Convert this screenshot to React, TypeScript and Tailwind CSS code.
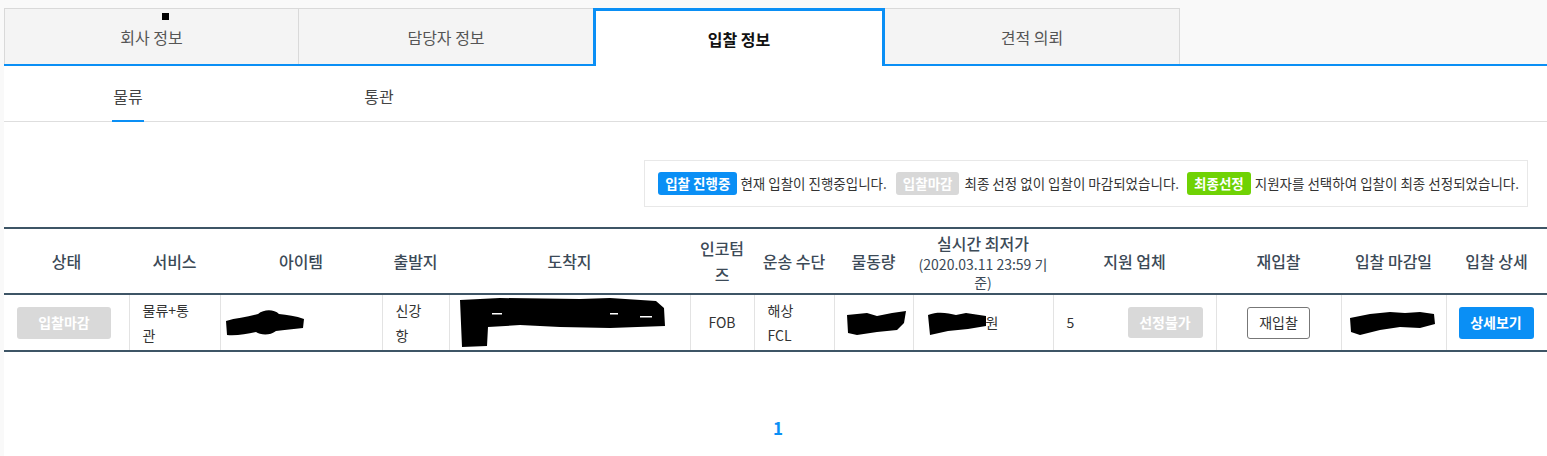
import React from "react";

const FONT = { fontFamily: '"Noto Sans CJK KR", "Noto Sans", sans-serif' };

function Blob({ w, h, d, extra }: { w: number; h: number; d: string; extra?: React.ReactNode }) {
  return (
    <svg width={w} height={h} viewBox={`0 0 ${w} ${h}`} className="block">
      <path d={d} fill="#000" />
      {extra}
    </svg>
  );
}

const cols = [125, 91, 162, 67, 241, 64, 80, 79, 140, 163, 125, 105, 101];

export default function App() {
  const tabs = ["회사 정보", "담당자 정보", "입찰 정보", "견적 의뢰"];
  const tabW = [294, 295, 292, 295];
  return (
    <div style={FONT} className="min-h-screen bg-[#f9f9f9] pl-[4px] pt-[8px] flex flex-col">
      {/* Top tabs */}
      <div className="relative flex items-end border-b-2 border-[#0a8ff5]">
        {tabs.map((t, i) =>
          i === 2 ? (
            <div
              key={t}
              style={{ width: tabW[i] }}
              className="h-[58px] -mb-[2px] bg-white border-t-[3px] border-x-[3px] border-[#0a8ff5] flex items-center justify-center text-[16px] font-bold text-[#111]"
            >
              {t}
            </div>
          ) : (
            <div
              key={t}
              style={{ width: tabW[i] }}
              className={`h-[56px] bg-[#f4f4f4] border-t border-[#d9d9d9] ${i === 0 ? "border-l" : ""} ${i === 3 ? "border-r" : ""} ${i === 1 ? "border-l" : ""} flex items-center justify-center text-[16px] text-[#555]`}
            >
              {t}
            </div>
          )
        )}
        <div className="absolute left-[158px] top-[5px] w-[7px] h-[7px] bg-black" />
      </div>

      {/* Content */}
      <div className="flex-1 bg-white">
        {/* Sub tabs */}
        <div className="flex border-b border-[#dedede]">
          <div className="w-[248px] flex justify-center">
            <span className="px-[1px] pt-[18px] pb-[12px] leading-[24px] text-[16px] text-[#444] border-b-[2px] border-[#0a8ff5] -mb-px">
              물류
            </span>
          </div>
          <div className="w-[254px] flex justify-center">
            <span className="pt-[18px] pb-[12px] leading-[24px] text-[16px] text-[#444] border-b-[2px] border-transparent -mb-px">
              통관
            </span>
          </div>
        </div>

        {/* Legend */}
        <div className="flex mt-[38px]">
          <div className="ml-auto mr-[19px] h-[47px] border border-[#e8e8e8] flex items-center pl-[13px] pr-[8px] whitespace-nowrap text-[13.5px] text-[#333]">
            <span className="h-[23px] leading-[23px] px-[7px] rounded-[3px] bg-[#0a8ff5] text-white font-bold">입찰 진행중</span>
            <span className="ml-[3px] mr-[9px]">현재 입찰이 진행중입니다.</span>
            <span className="h-[23px] leading-[23px] px-[7px] rounded-[3px] bg-[#d8d8d8] text-white font-bold">입찰마감</span>
            <span className="ml-[5px] mr-[8px]">최종 선정 없이 입찰이 마감되었습니다.</span>
            <span className="h-[23px] leading-[23px] px-[7px] rounded-[3px] bg-[#6fd204] text-white font-bold">최종선정</span>
            <span className="ml-[4px]">지원자를 선택하여 입찰이 최종 선정되었습니다.</span>
          </div>
        </div>

        {/* Table */}
        <table className="mt-[20px] table-fixed border-collapse w-[1543px]">
          <colgroup>
            {cols.map((w, i) => (
              <col key={i} style={{ width: w }} />
            ))}
          </colgroup>
          <thead>
            <tr className="h-[66px] border-t-2 border-b-2 border-[#3e5566]">
              {["상태", "서비스", "아이템", "출발지", "도착지"].map((h) => (
                <th key={h} className="px-[6px] py-[3px] text-[16px] font-medium text-[#3c4a57] leading-[23px] text-center align-middle">
                  {h}
                </th>
              ))}
              <th className="px-[4px] py-[3px] text-[16px] font-medium text-[#3c4a57] leading-[26px] text-center align-middle">
                인코텀
                <br />즈
              </th>
              <th className="px-[4px] py-[3px] text-[16px] font-medium text-[#3c4a57] leading-[23px] text-center align-middle whitespace-nowrap">
                운송 수단
              </th>
              <th className="px-[4px] py-[3px] text-[16px] font-medium text-[#3c4a57] leading-[23px] text-center align-middle">
                물동량
              </th>
              <th className="px-[2px] py-[2px] text-[16px] font-medium text-[#3c4a57] leading-[24px] text-center align-middle whitespace-nowrap">
                실시간 최저가
                <span className="block text-[14px] leading-[18px] font-normal">
                  (2020.03.11 23:59 기
                  <br />준)
                </span>
              </th>
              {["지원 업체", "재입찰", "입찰 마감일", "입찰 상세"].map((h) => (
                <th key={h} className="px-[4px] py-[3px] text-[16px] font-medium text-[#3c4a57] leading-[23px] text-center align-middle whitespace-nowrap">
                  {h}
                </th>
              ))}
            </tr>
          </thead>
          <tbody>
            <tr className="h-[57px] border-b-2 border-[#3e5566] text-[14px] leading-[25px] text-[#333]">
              <td className="pl-[13px] pr-[4px] align-middle">
                <div className="w-[94px] h-[32px] rounded-[3px] bg-[#d9d9d9] text-white font-bold flex items-center justify-center">
                  입찰마감
                </div>
              </td>
              <td className="border-l border-[#e3e3e3] px-[13px] align-middle">
                물류+통
                <br />관
              </td>
              <td className="border-l border-[#e3e3e3] pl-[5px] align-middle">
                <Blob
                  w={78}
                  h={28}
                  d="M0 12 C10 9 22 8 32 5 C38 0 48 0 53 5 C61 6 70 7 78 10 L77 19 C68 20 58 21 50 22 C44 27 34 26 30 23 C20 25 10 27 1 26 Z"
                />
              </td>
              <td className="border-l border-[#e3e3e3] px-[13px] align-middle">
                신강
                <br />항
              </td>
              <td className="border-l border-[#e3e3e3] pl-[10px] align-middle">
                <Blob
                  w={206}
                  h={50}
                  d="M0 2 L40 0 L120 1 L150 0 L196 3 L204 10 L205 28 L150 30 L100 29 L60 27 L28 29 L27 48 L2 49 Z"
                  extra={
                    <>
                      <rect x="32" y="15" width="10" height="1.5" fill="#fff" />
                      <rect x="150" y="15" width="8" height="1.5" fill="#fff" />
                      <rect x="180" y="18" width="12" height="1.5" fill="#fff" />
                    </>
                  }
                />
              </td>
              <td className="border-l border-[#e3e3e3] text-center align-middle">FOB</td>
              <td className="border-l border-[#e3e3e3] px-[13px] align-middle">
                해상
                <br />
                FCL
              </td>
              <td className="border-l border-[#e3e3e3] pl-[12px] align-middle">
                <Blob w={59} h={24} d="M0 4 L20 2 L30 5 L45 2 L59 0 L57 12 L50 19 L30 21 L10 24 L1 22 Z" />
              </td>
              <td className="border-l border-[#e3e3e3] pl-[14px] align-middle">
                <div className="flex items-center">
                  <Blob w={58} h={24} d="M0 4 C10 0 20 2 28 4 L38 2 L58 5 L58 15 L40 18 L20 20 L2 24 Z" />
                  <span>원</span>
                </div>
              </td>
              <td className="border-l border-[#e3e3e3] pl-[13px] pr-[13px] align-middle">
                <div className="flex items-center justify-between">
                  <span>5</span>
                  <div className="w-[75px] h-[31px] rounded-[3px] bg-[#d9d9d9] text-white font-bold flex items-center justify-center">
                    선정불가
                  </div>
                </div>
              </td>
              <td className="border-l border-[#e3e3e3] align-middle">
                <div className="mx-auto w-[63px] h-[32px] rounded-[3px] border border-[#777] bg-white text-[#333] flex items-center justify-center">
                  재입찰
                </div>
              </td>
              <td className="border-l border-[#e3e3e3] pl-[8px] align-middle">
                <Blob w={85} h={25} d="M0 8 L20 4 L40 2 L55 3 L70 2 L84 4 L85 14 L70 18 L50 17 L30 20 L10 25 L1 22 Z" />
              </td>
              <td className="border-l border-[#e3e3e3] pl-[12px] align-middle">
                <div className="w-[75px] h-[32px] rounded-[3px] bg-[#0a8ff5] text-white font-bold flex items-center justify-center">
                  상세보기
                </div>
              </td>
            </tr>
          </tbody>
        </table>

        {/* Pagination */}
        <div className="pt-[64px] pl-[5px] text-center text-[17px] leading-[24px] font-bold text-[#0a8ff5]">1</div>
      </div>
    </div>
  );
}
